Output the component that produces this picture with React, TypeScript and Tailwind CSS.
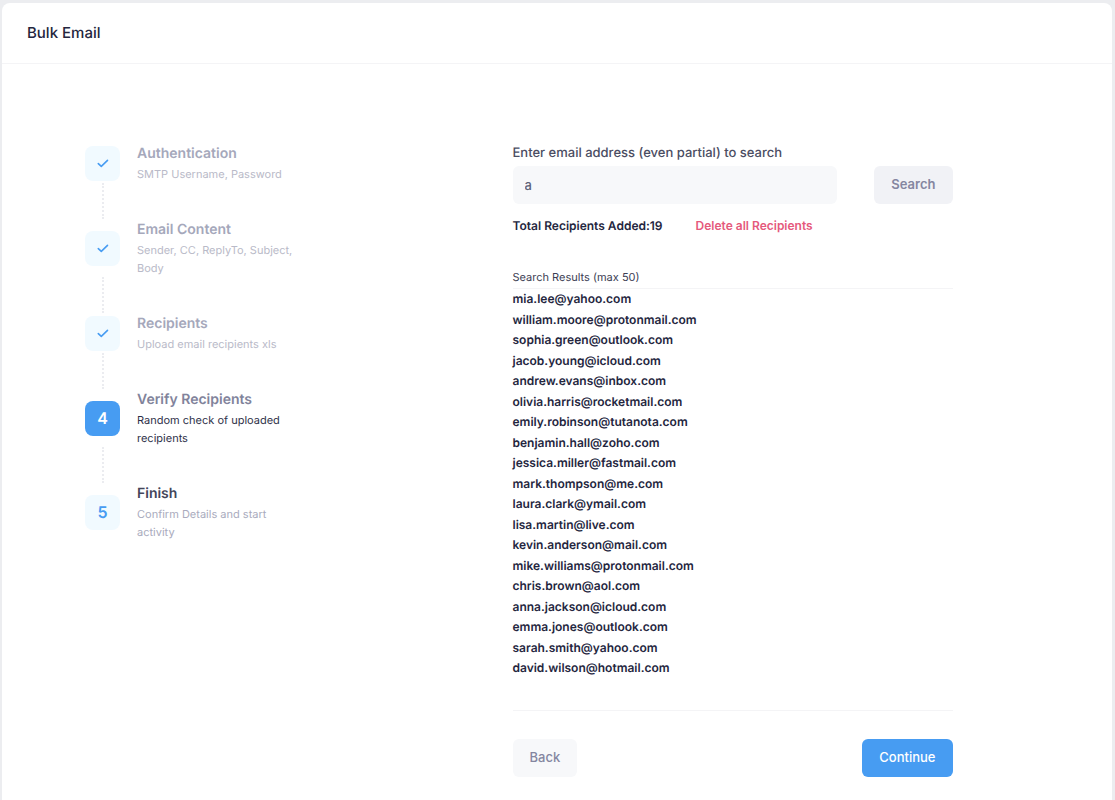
import { useState } from "react";

interface StepProps {
  title: string;
  description: string;
  status: "done" | "current" | "pending";
}

const steps: StepProps[] = [
  { title: "Authentication", description: "SMTP Username, Password", status: "done" },
  { title: "Email Content", description: "Sender, CC, ReplyTo, Subject, Body", status: "done" },
  { title: "Recipients", description: "Upload email recipients xls", status: "done" },
  { title: "Verify Recipients", description: "Random check of uploaded recipients", status: "current" },
  { title: "Finish", description: "Confirm Details and start activity", status: "pending" },
];

const recipients = [
  "mia.lee@yahoo.com",
  "william.moore@protonmail.com",
  "sophia.green@outlook.com",
  "jacob.young@icloud.com",
  "andrew.evans@inbox.com",
  "olivia.harris@rocketmail.com",
  "emily.robinson@tutanota.com",
  "benjamin.hall@zoho.com",
  "jessica.miller@fastmail.com",
  "mark.thompson@me.com",
  "laura.clark@ymail.com",
  "lisa.martin@live.com",
  "kevin.anderson@mail.com",
  "mike.williams@protonmail.com",
  "chris.brown@aol.com",
  "anna.jackson@icloud.com",
  "emma.jones@outlook.com",
  "sarah.smith@yahoo.com",
  "david.wilson@hotmail.com",
];

const badgeStyles = {
  done: "bg-[#f1faff] text-[#479cf2]",
  current: "bg-[#479cf2] text-white",
  pending: "bg-[#f1faff] text-[#479cf2]",
};

const titleStyles = {
  done: "text-[#a5a8bb]",
  current: "text-[#81839b]",
  pending: "text-[#43455a]",
};

const descriptionStyles = {
  done: "text-[#b9bac8]",
  current: "text-[#2e3048]",
  pending: "text-[#a9abbd]",
};

function CheckIcon() {
  return (
    <svg width="12" height="9" viewBox="0 0 12 9" fill="none" aria-hidden="true">
      <path
        d="M1.3 4.6L4.3 7.4L10.5 1.4"
        stroke="currentColor"
        strokeWidth="1.6"
        strokeLinecap="round"
        strokeLinejoin="round"
      />
    </svg>
  );
}

function Step({ step, number, last }: { step: StepProps; number: number; last: boolean }) {
  return (
    <li>
      <div className="flex items-center gap-[17px]">
        <div
          className={`flex size-[35px] shrink-0 items-center justify-center rounded-lg text-base font-semibold ${badgeStyles[step.status]}`}
        >
          {step.status === "done" ? <CheckIcon /> : number}
        </div>
        <div className="max-w-[165px]">
          <h3 className={`text-sm leading-[22px] font-semibold ${titleStyles[step.status]}`}>{step.title}</h3>
          <p className={`text-[11px] leading-[18px] ${descriptionStyles[step.status]}`}>{step.description}</p>
        </div>
      </div>
      {!last && <div className="ml-[17px] h-9 border-l-2 border-dotted border-[#ebecf0]"></div>}
    </li>
  );
}

export default function App() {
  const [search, setSearch] = useState("a");

  return (
    <div className="flex min-h-screen flex-col bg-[#ecedf0] pt-[3px] pr-[3px] pl-0.5 font-['Inter',sans-serif] text-[13px] text-[#24263e] [text-rendering:geometricPrecision]">
      <div className="flex-1 rounded-t-lg bg-white">
        <header className="flex h-[61px] items-center border-b border-[#f4f4f6] px-[25px]">
          <h1 className="text-[15px] font-medium">Bulk Email</h1>
        </header>

        <div className="flex pt-[79px] pb-[22px]">
          <aside className="w-[351px] shrink-0 pl-[83px]">
            <ol>
              {steps.map((step, index) => (
                <Step key={step.title} step={step} number={index + 1} last={index === steps.length - 1} />
              ))}
            </ol>
          </aside>

          <main className="flex flex-1 justify-center">
            <form className="w-full max-w-[440px]" onSubmit={(e) => e.preventDefault()}>
              <label htmlFor="search" className="mb-[3px] block leading-5 font-medium text-[#4b4d62]">
                Enter email address (even partial) to search
              </label>
              <div className="flex gap-[37px]">
                <input
                  id="search"
                  type="text"
                  className="h-[38px] min-w-0 flex-1 rounded-md bg-[#f7f8fa] px-3 font-medium text-[#5e6278] outline-none"
                  value={search}
                  onChange={(e) => setSearch(e.target.value)}
                />
                <button type="submit" className="h-[38px] rounded-md bg-[#f1f2f6] px-[17px] font-semibold text-[#8486a0]">
                  Search
                </button>
              </div>

              <div className="mt-3 flex items-baseline gap-[33px] text-xs leading-5 font-semibold">
                <span>Total Recipients Added:19</span>
                <button type="button" className="text-[#e5597c]">
                  Delete all Recipients
                </button>
              </div>

              <h2 className="mt-[30px] border-b border-[#f4f4f6] text-[11px] leading-[22px] text-[#3c3e54]">
                Search Results (max 50)
              </h2>
              <ul className="grid min-h-[389px] content-between text-xs leading-5 font-semibold">
                {recipients.map((email) => (
                  <li key={email}>{email}</li>
                ))}
              </ul>

              <div className="mt-8 flex justify-between border-t border-[#f4f4f6] pt-7">
                <button type="button" className="h-[38px] rounded-md bg-[#f7f8fa] px-[17px] font-medium text-[#8486a0]">
                  Back
                </button>
                <button type="button" className="h-[38px] rounded-md bg-[#479cf2] px-[17px] font-medium text-white">
                  Continue
                </button>
              </div>
            </form>
          </main>
        </div>
      </div>
    </div>
  );
}
